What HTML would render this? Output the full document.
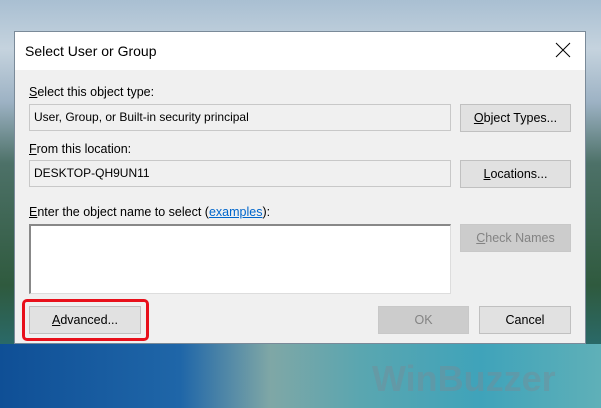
<!DOCTYPE html>
<html><head><style>
*{margin:0;padding:0;box-sizing:border-box}
body{width:601px;height:408px;overflow:hidden;position:relative;font-family:"Liberation Sans",sans-serif;font-size:12.5px;color:#000;
background:linear-gradient(180deg,#a9bfd2 0%,#c5d3de 12%,#9db2c4 25%,#4d7168 40%,#2f5a3e 70%,#2a6a6a 85%,#2a7ca8 100%)}
.sea{position:absolute;left:0;top:344px;width:601px;height:64px;background:linear-gradient(90deg,#0f4f96 0%,#1f66a8 30%,#7fa7a6 45%,#5aa6b0 60%,#3fa3ba 80%,#5fb0b8 100%)}
.dlg{position:absolute;left:14px;top:31px;width:572px;height:313px;background:#f0f0f0;border:1px solid #7a8a99}
.tb{height:38px;background:#fff;position:relative}
.tb span{position:absolute;left:10px;top:11px;font-size:14px}
.x{position:absolute;right:14px;top:10px;width:16px;height:16px}
.a{position:absolute}
.lbl{font-size:12.5px}
.tx{background:#f0f0f0;border:1px solid #c8c8c8;padding:5px 4px;height:27px;font-size:12px}
.ta{background:#fff;border:1px solid #ddd;border-top:2px solid #888;border-left:2px solid #888}
.btn{background:#e1e1e1;border:1px solid #c0c0c0;text-align:center;line-height:26px;height:28px}
.dis{color:#838383;background:#cccccc;border-color:#c8c8c8}
.red{position:absolute;left:22px;top:299px;width:127px;height:42px;border:3px solid #e8101b;border-radius:5px}
.wm{position:absolute;left:372px;top:358px;font:bold 36px "Liberation Sans",sans-serif;color:rgba(120,140,150,.45)}
</style></head><body>
<div class="sea"></div>
<div class="wm">WinBuzzer</div>
<div class="dlg">
<div class="tb"><span>Select User or Group</span>
<svg class="x" viewBox="0 0 16 16"><path d="M1 1L15 15M15 1L1 15" stroke="#000" stroke-width="1"/></svg></div>
</div>
<div class="a lbl" style="left:29px;top:85px"><u>S</u>elect this object type:</div>
<div class="a tx" style="left:29px;top:104px;width:422px">User, Group, or Built-in security principal</div>
<div class="a btn" style="left:460px;top:104px;width:111px"><u>O</u>bject Types...</div>
<div class="a lbl" style="left:29px;top:142px"><u>F</u>rom this location:</div>
<div class="a tx" style="left:29px;top:160px;width:422px">DESKTOP-QH9UN11</div>
<div class="a btn" style="left:460px;top:160px;width:111px"><u>L</u>ocations...</div>
<div class="a lbl" style="left:29px;top:205px"><u>E</u>nter the object name to select (<span style="color:#0066cc;text-decoration:underline">examples</span>):</div>
<div class="a ta" style="left:29px;top:224px;width:422px;height:70px"></div>
<div class="a btn dis" style="left:460px;top:224px;width:111px"><u>C</u>heck Names</div>
<div class="a btn" style="left:29px;top:306px;width:112px"><u>A</u>dvanced...</div>
<div class="a btn dis" style="left:378px;top:306px;width:91px">OK</div>
<div class="a btn" style="left:479px;top:306px;width:92px">Cancel</div>
<div class="red"></div>
</body></html>
